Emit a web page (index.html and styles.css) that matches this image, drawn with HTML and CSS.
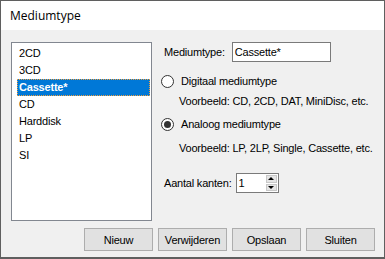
FILE: index.html
```html
<!DOCTYPE html>
<html lang="nl">
<head>
    <meta charset="UTF-8">
    <title>Mediumtype</title>
    <link rel="stylesheet" href="styles.css">
</head>
<body>
    <div class="window">
        <div class="titlebar">Mediumtype</div>

        <div class="content">
            <div class="main">
                <ul class="listbox">
                    <li>2CD</li>
                    <li>3CD</li>
                    <li class="selected">Cassette*</li>
                    <li>CD</li>
                    <li>Harddisk</li>
                    <li>LP</li>
                    <li>SI</li>
                </ul>

                <div class="props">
                    <div class="name-row">
                        <span>Mediumtype:</span>
                        <div class="textbox">Cassette*</div>
                    </div>

                    <div class="radio-row first">
                        <span class="radio"></span>
                        <span>Digitaal mediumtype</span>
                    </div>
                    <div class="example">Voorbeeld: CD, 2CD, DAT, MiniDisc, etc.</div>

                    <div class="radio-row">
                        <span class="radio checked"></span>
                        <span>Analoog mediumtype</span>
                    </div>
                    <div class="example">Voorbeeld: LP, 2LP, Single, Cassette, etc.</div>

                    <div class="count-row">
                        <span>Aantal kanten:</span>
                        <div class="spinbox">
                            <span class="spin-value">1</span>
                            <div class="spin-buttons">
                                <span class="spin-btn up"></span>
                                <span class="spin-btn down"></span>
                            </div>
                        </div>
                    </div>
                </div>
            </div>

            <div class="buttons">
                <button>Nieuw</button>
                <button>Verwijderen</button>
                <button>Opslaan</button>
                <button>Sluiten</button>
            </div>
        </div>
    </div>
</body>
</html>
```

FILE: styles.css
```css
* {
    box-sizing: border-box;
}

body {
    margin: 0;
    background: #f0f0f0;
    font-family: "Liberation Sans", Arial, sans-serif;
    font-size: 11px;
    letter-spacing: -0.2px;
    color: #000;
}

.window {
    width: 385px;
    height: 259px;
    border: 1px solid #5f5f5f;
    border-bottom-width: 2px;
    background: #f0f0f0;
    display: flex;
    flex-direction: column;
}

.titlebar {
    height: 29px;
    background: #fff;
    font-family: "Open Sans", "Noto Sans", sans-serif;
    font-size: 12px;
    letter-spacing: 0;
    padding-left: 9px;
    line-height: 30px;
}

.content {
    flex: 1;
    display: flex;
    flex-direction: column;
}

.main {
    display: flex;
    padding: 12px 0 0 10px;
}

.listbox {
    list-style: none;
    margin: 0;
    width: 141px;
    height: 179px;
    padding: 2px 1px 0 5px;
    background: #fff;
    border: 1px solid #828790;
}

.listbox li {
    height: 17px;
    line-height: 17px;
    padding-left: 2px;
}

.listbox li.selected {
    background: #0078d7;
    color: #fff;
    font-weight: bold;
    outline: 1px dotted #f0a040;
    outline-offset: -1px;
}

.props {
    flex: 1;
    padding-left: 9px;
}

.name-row {
    display: flex;
    align-items: center;
    padding-left: 3px;
}

.textbox {
    width: 99px;
    height: 20px;
    margin-left: 7px;
    background: #fff;
    border: 1px solid #7a7a7a;
    padding-left: 2px;
    line-height: 18px;
}

.radio-row {
    display: flex;
    align-items: center;
    gap: 7px;
    height: 16px;
    margin-top: 8px;
}

.radio-row.first {
    margin-top: 11px;
}

.radio {
    width: 13px;
    height: 13px;
    border: 1px solid #333;
    border-radius: 50%;
    background: #fff;
    display: flex;
    align-items: center;
    justify-content: center;
}

.radio.checked::after {
    content: "";
    width: 7px;
    height: 7px;
    border-radius: 50%;
    background: #333;
}

.example {
    height: 14px;
    line-height: 14px;
    margin-top: 5px;
    padding-left: 18px;
}

.radio-row:not(.first) + .example {
    margin-top: 9px;
}

.count-row {
    display: flex;
    align-items: center;
    gap: 4px;
    margin-top: 18px;
    padding-left: 3px;
}

.spinbox {
    width: 43px;
    height: 20px;
    background: #fff;
    border: 1px solid #7a7a7a;
    display: flex;
    justify-content: space-between;
}

.spin-value {
    padding-left: 2px;
    line-height: 18px;
}

.spin-buttons {
    width: 12px;
    display: flex;
    flex-direction: column;
    padding: 1px 1px 1px 0;
    gap: 1px;
}

.spin-btn {
    flex: 1;
    background: #e5e5e5;
    border: 1px solid #c8c8c8;
    display: flex;
    align-items: center;
    justify-content: center;
}

.spin-btn.up::after {
    content: "";
    border-left: 3px solid transparent;
    border-right: 3px solid transparent;
    border-bottom: 3px solid #000;
}

.spin-btn.down::after {
    content: "";
    border-left: 3px solid transparent;
    border-right: 3px solid transparent;
    border-top: 3px solid #000;
}

.buttons {
    display: flex;
    justify-content: flex-end;
    gap: 5px;
    margin-top: 7px;
    padding-right: 9px;
}

.buttons button {
    width: 69px;
    height: 23px;
    background: #e1e1e1;
    border: 1px solid #adadad;
    font-family: "Liberation Sans", Arial, sans-serif;
    font-size: 11px;
    letter-spacing: -0.2px;
    color: #000;
    padding: 0;
}
```
